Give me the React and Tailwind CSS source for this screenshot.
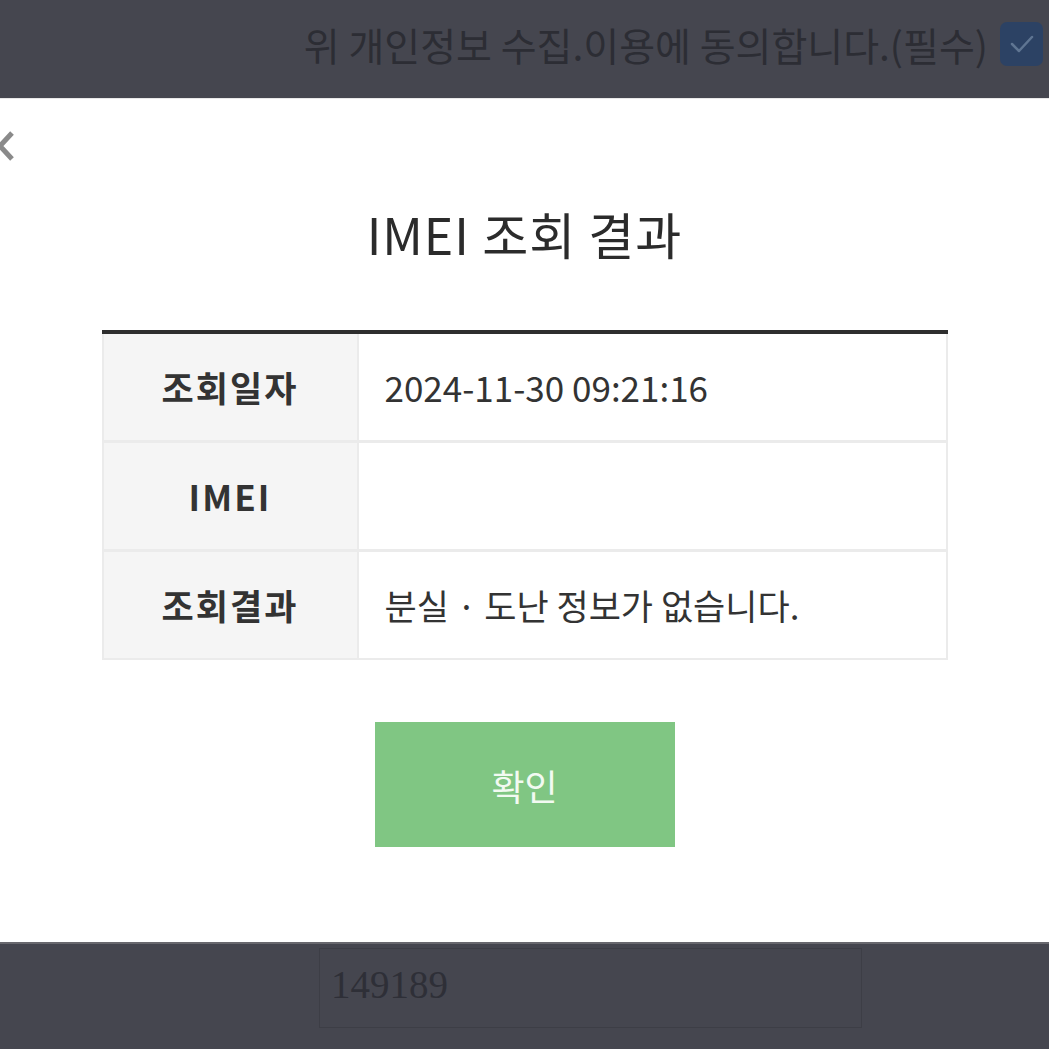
import React from "react"

const font = { fontFamily: '"Noto Sans CJK KR", "Noto Sans", sans-serif' }

const rows = [
  { label: "조회일자", value: "2024-11-30 09:21:16" },
  { label: "IMEI", value: "" },
  { label: "조회결과", value: "분실 · 도난 정보가 없습니다." },
]

const App = () => {
  return (
    <div className="flex h-[1049px] w-[1049px] flex-col overflow-hidden bg-[#45464f]" style={font}>
      {/* dimmed page behind the modal */}
      <div className="flex h-[98px] shrink-0 items-start justify-end gap-[12px] pr-[6px] pt-[22px]">
        <span className="text-[39px] leading-[44px] text-[#2c2d34]">위 개인정보 수집.이용에 동의합니다.(필수)</span>
        <div className="flex h-[44px] w-[43px] items-center justify-center rounded-[7px] bg-[#2c4264]">
          <svg width="26" height="22" viewBox="0 0 26 22" fill="none">
            <path d="M3 11 L10 18 L23 4" stroke="#5f7592" strokeWidth="2.5" strokeLinecap="round" strokeLinejoin="round" />
          </svg>
        </div>
      </div>

      {/* modal */}
      <div className="relative flex h-[844px] shrink-0 flex-col items-center border-t border-[#e8e8e8] bg-white pt-[101px]">
        <button className="absolute left-[-5px] top-[32px]">
          <svg width="20" height="30" viewBox="0 0 20 30" fill="none">
            <path d="M17 2 L5 15 L17 28" stroke="#8a8a8a" strokeWidth="5" />
          </svg>
        </button>

        <h1 className="h-[66px] text-[50px] leading-[66px] tracking-[0.02em] text-[#2b2b2b]">IMEI 조회 결과</h1>

        <div className="mt-[64px] w-[846px] border-t-4 border-[#2e2e2e]">
          <div className="grid grid-cols-[253px_587px] gap-x-[2px] gap-y-[3px] bg-[#ebebeb] px-[2px] pb-[2px]">
            {rows.map((r) => (
              <React.Fragment key={r.label}>
                <div className="flex h-[106px] items-center justify-center bg-[#f5f5f5] text-[35px] font-bold tracking-[0.06em] text-[#333]">
                  {r.label}
                </div>
                <div className="flex h-[106px] items-center bg-white pl-[26px] text-[35px] text-[#333]">
                  {r.value}
                </div>
              </React.Fragment>
            ))}
          </div>
        </div>

        <button className="mt-[62px] flex h-[125px] w-[300px] items-center justify-center bg-[#80c683] text-[36px] text-[#f2faf2]">
          확인
        </button>
      </div>

      {/* dimmed page below */}
      <div className="flex flex-1 border-t-2 border-[#68686e] pl-[319px] pt-[4px]">
        <div className="flex h-[80px] w-[543px] items-start border border-[#3d3e46] pl-[11px] pt-[12px]">
          <span className="text-[39px] leading-[48px] text-[#2e2f37]" style={{ fontFamily: '"Liberation Serif", serif' }}>
            149189
          </span>
        </div>
      </div>
    </div>
  )
}

export default App
